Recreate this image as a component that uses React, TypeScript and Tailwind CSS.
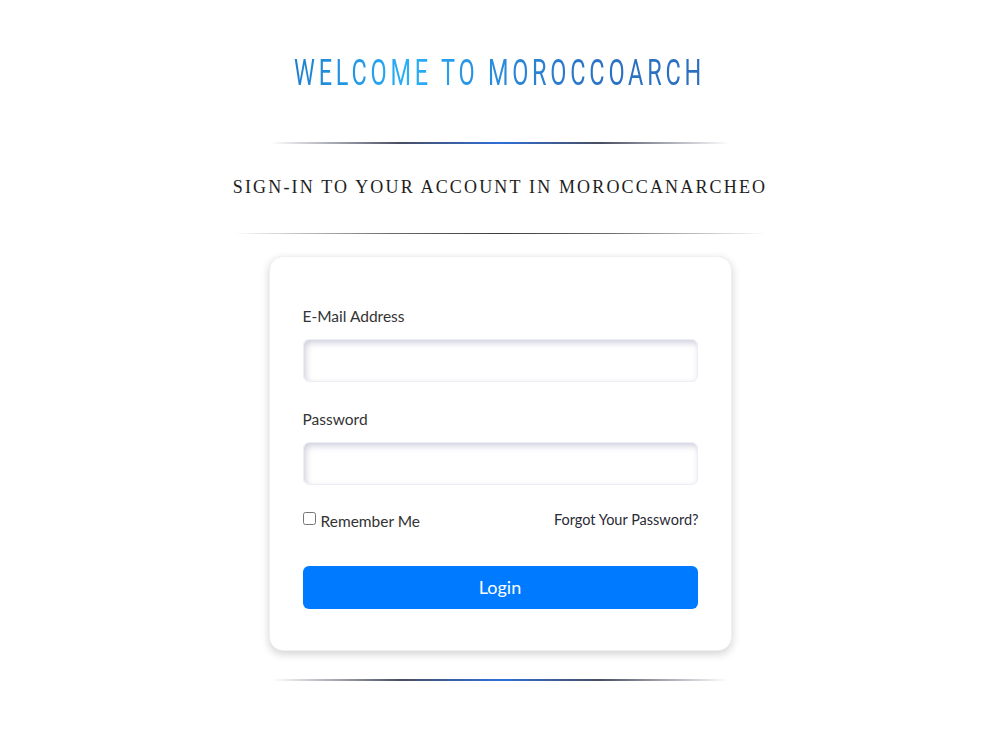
import { useState } from "react";

function Rule({ width, tone }: { width: string; tone: "blue" | "gray" }) {
  const grad =
    tone === "blue"
      ? "bg-[linear-gradient(90deg,rgba(255,255,255,0),#4a4e62_28%,#2f6fd8_50%,#4a4e62_72%,rgba(255,255,255,0))]"
      : "bg-[linear-gradient(90deg,rgba(255,255,255,0),#6a6a6a_30%,#3c3c3c_50%,#6a6a6a_70%,rgba(255,255,255,0))]";
  return <div className={`h-[1.5px] ${width} ${grad}`} />;
}

export default function App() {
  const [email, setEmail] = useState("");
  const [password, setPassword] = useState("");
  const [remember, setRemember] = useState(false);

  return (
    <div className="min-h-[750px] w-full bg-white flex flex-col items-center font-['Lato','Noto_Sans',sans-serif]">
      <h1 className="mt-[52px] h-[42px] flex justify-center">
        <span className="inline-block scale-x-[0.635] whitespace-nowrap text-[37px] leading-[42px] tracking-[0.16em] font-normal font-['Roboto',sans-serif] bg-[linear-gradient(90deg,#1e7fd0,#27b0f8_28%,#2a8fe0_45%,#2a72c4_75%,#2b6fbe)] bg-clip-text text-transparent">
          WELCOME TO MOROCCOARCH
        </span>
      </h1>

      <div className="mt-[48px]">
        <Rule width="w-[458px]" tone="blue" />
      </div>

      <h2 className="mt-[32px] text-[18px] leading-[22px] tracking-[0.12em] text-[#1e1e1e] font-['Liberation_Serif','DejaVu_Serif',serif]">
        SIGN-IN TO YOUR ACCOUNT IN MOROCCANARCHEO
      </h2>

      <div className="mt-[35px]">
        <Rule width="w-[534px]" tone="gray" />
      </div>

      <form
        className="mt-[22px] w-[463px] rounded-[14px] border border-[#eef0f4] bg-white px-[33px] pt-[50px] pb-[41px] shadow-[0_3px_8px_rgba(0,0,0,0.18)]"
        onSubmit={(e) => e.preventDefault()}
      >
        <label className="block text-[15.5px] leading-[18px] text-[#333]">E-Mail Address</label>
        <input
          type="email"
          value={email}
          onChange={(e) => setEmail(e.target.value)}
          className="mt-[14px] block h-[43px] w-full rounded-[6px] border border-[#eceef4] bg-white px-3 outline-none shadow-[inset_2px_3px_6px_rgba(100,100,150,0.3)]"
        />

        <label className="mt-[28px] block text-[15.5px] leading-[18px] text-[#333]">Password</label>
        <input
          type="password"
          value={password}
          onChange={(e) => setPassword(e.target.value)}
          className="mt-[14px] block h-[43px] w-full rounded-[6px] border border-[#eceef4] bg-white px-3 outline-none shadow-[inset_2px_3px_6px_rgba(100,100,150,0.3)]"
        />

        <div className="mt-[24px] flex items-center justify-between leading-[18px] text-[#333]">
          <label className="flex items-center gap-[5px]">
            <input
              type="checkbox"
              checked={remember}
              onChange={(e) => setRemember(e.target.checked)}
              className="m-0 mb-[2px] h-[13px] w-[13px]"
            />
            <span className="mt-[3px] text-[15.5px]">Remember Me</span>
          </label>
          <a href="#" className="mt-[1px] mr-[-1px] text-[14.5px] text-[#2a2a35]">
            Forgot Your Password?
          </a>
        </div>

        <button
          type="submit"
          className="mt-[36px] h-[43px] w-full rounded-[6px] bg-[#007bff] text-[18px] text-white"
        >
          Login
        </button>
      </form>

      <div className="mt-[28px]">
        <Rule width="w-[456px]" tone="blue" />
      </div>
    </div>
  );
}
